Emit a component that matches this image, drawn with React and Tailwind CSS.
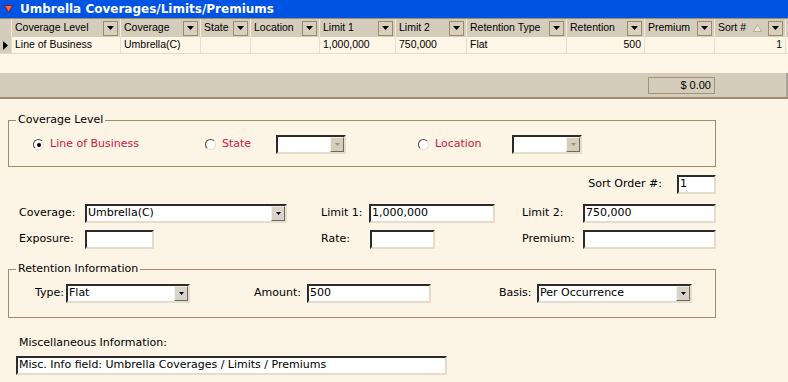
import React from 'react';

const columns = [
  { key: 'level', title: 'Coverage Level' },
  { key: 'coverage', title: 'Coverage' },
  { key: 'state', title: 'State' },
  { key: 'location', title: 'Location' },
  { key: 'limit1', title: 'Limit 1' },
  { key: 'limit2', title: 'Limit 2' },
  { key: 'retType', title: 'Retention Type' },
  { key: 'retention', title: 'Retention', right: true },
  { key: 'premium', title: 'Premium' },
  { key: 'sort', title: 'Sort #', right: true, sorted: true },
];

const row = {
  level: 'Line of Business',
  coverage: 'Umbrella(C)',
  state: '',
  location: '',
  limit1: '1,000,000',
  limit2: '750,000',
  retType: 'Flat',
  retention: '500',
  premium: '',
  sort: '1',
};

const gridCols = 'grid grid-cols-[12px_109px_80px_50px_69px_76px_71px_100px_78px_70px_71px]';

const HeaderButton = () => (
  <div className="flex h-[15px] w-[15px] shrink-0 items-center justify-center border border-[#9c8a68] bg-[#d8d0bf]">
    <svg width="7" height="4" viewBox="0 0 7 4">
      <path d="M0 0h7L3.5 4z" fill="#000" />
    </svg>
  </div>
);

const Field = ({ w, value = '' }) => (
  <div className={`${w} flex h-[19px] items-center border-2 border-t-[#2b2b2b] border-l-[#2b2b2b] border-r-[#e4ddcc] border-b-[#e4ddcc] bg-white px-[1px] text-black`}>
    {value}
  </div>
);

const Select = ({ w, value = '', disabled }) => (
  <div className={`${w} flex h-[19px] items-stretch border-2 border-t-[#2b2b2b] border-l-[#2b2b2b] border-r-[#e4ddcc] border-b-[#e4ddcc] bg-white`}>
    <div className="flex flex-1 items-center px-[1px]">{value}</div>
    <div
      className={`flex w-[14px] items-center justify-center border border-t-[#f4f1ea] border-l-[#f4f1ea] border-r-[#6e6a60] border-b-[#6e6a60] ${
        disabled ? 'bg-[#d6ceba]' : 'bg-[#d8d4cc]'
      }`}
    >
      <svg width="5" height="3" viewBox="0 0 5 3">
        <path d="M0 0h5L2.5 3z" fill={disabled ? '#9a9080' : '#000'} />
      </svg>
    </div>
  </div>
);

const Radio = ({ checked }) => (
  <div className="flex h-[11px] w-[11px] shrink-0 items-center justify-center rounded-full border border-t-[#4a4a4a] border-l-[#4a4a4a] border-r-[#e6e0d2] border-b-[#e6e0d2] bg-white">
    {checked && <div className="h-[4px] w-[4px] rounded-full bg-black" />}
  </div>
);

export default function App() {
  return (
    <div className="h-[382px] w-[788px] overflow-hidden bg-[#fcf4e4] font-['DejaVu_Sans',sans-serif] text-[11px] text-black">
      {/* title bar */}
      <div className="flex h-[18px] items-center bg-[#0054e3] pl-[4px]">
        <svg width="9" height="8" viewBox="0 0 9 8">
          <path d="M0.5 0.5h8L4.5 7.5z" fill="#e86a5c" stroke="#8a1a10" strokeWidth="1" />
        </svg>
        <span className="ml-[7px] text-[12px] font-bold leading-none text-white">Umbrella Coverages/Limits/Premiums</span>
      </div>

      {/* grid */}
      <div className="border-b-[2px] border-[#a08c6c] font-['Liberation_Sans',sans-serif] text-[10.5px]">
        <div className={`${gridCols} h-[19px] border-t border-[#a08c6c] bg-[#d5cdbc]`}>
          <div className="border-r border-[#f0ebe1]" />
          {columns.map((c) => (
            <div key={c.key} className="flex items-center justify-between border-r border-[#f0ebe1] pl-[3px] pr-[2px]">
              <span>{c.title}</span>
              <div className="flex items-center gap-[6px]">
                {c.sorted && (
                  <svg width="9" height="8" viewBox="0 0 9 8">
                    <path d="M4.5 0.5L8.5 7.5h-8z" fill="#ece6d8" stroke="#b8ad96" strokeWidth="1" />
                  </svg>
                )}
                <HeaderButton />
              </div>
            </div>
          ))}
        </div>
        <div className={`${gridCols} h-[17px] border-b border-[#e2ddd2] bg-[#fdf5e6]`}>
          <div className="flex items-center justify-center border-r border-[#e2ddd2] bg-[#d5cdbc]">
            <svg width="5" height="9" viewBox="0 0 5 9">
              <path d="M0 0l5 4.5L0 9z" fill="#000" />
            </svg>
          </div>
          {columns.map((c) => (
            <div
              key={c.key}
              className={`flex items-center border-r border-[#e2ddd2] px-[3px] ${c.right ? 'justify-end' : ''}`}
            >
              {row[c.key]}
            </div>
          ))}
        </div>
        <div className="h-[19px] bg-[#fdf5e6]" />
        <div className="flex h-[24px] items-center border-r-2 border-[#a8a39a] bg-[#d5cdbc]">
          <div className="ml-[648px] flex h-[17px] w-[67px] items-center justify-end border border-[#a69270] pr-[3px] text-[11px]">
            $ 0.00
          </div>
        </div>
      </div>

      {/* coverage level */}
      <fieldset className="ml-[8px] mt-[14px] w-[708px] border border-[#a08c6c] pb-[12px] pt-[8px]">
        <legend className="ml-[7px] px-[2px] leading-[14px]">Coverage Level</legend>
        <div className="flex items-center pl-[24px] text-[#d7143c]">
          <div className="flex w-[172px] items-center gap-[6px]">
            <Radio checked />
            <span>Line of Business</span>
          </div>
          <div className="flex w-[71px] items-center gap-[6px]">
            <Radio />
            <span>State</span>
          </div>
          <Select w="w-[70px]" disabled />
          <div className="ml-[72px] flex w-[94px] items-center gap-[6px]">
            <Radio />
            <span>Location</span>
          </div>
          <Select w="w-[70px]" disabled />
        </div>
      </fieldset>

      {/* sort order */}
      <div className="mt-[8px] flex w-[716px] items-center justify-end gap-[15px]">
        <span>Sort Order #:</span>
        <Field w="w-[39px]" value="1" />
      </div>

      {/* coverage / limits */}
      <div className="mt-[10px] grid grid-cols-[85px_236px_48px_153px_61px_133px] items-center">
        <span className="pl-[19px]">Coverage:</span>
        <Select w="w-[202px]" value="Umbrella(C)" />
        <span>Limit 1:</span>
        <Field w="w-[126px]" value="1,000,000" />
        <span>Limit 2:</span>
        <Field w="w-[133px]" value="750,000" />
      </div>
      <div className="mt-[7px] grid grid-cols-[85px_236px_49px_152px_61px_133px] items-center">
        <span className="pl-[19px]">Exposure:</span>
        <Field w="w-[69px]" />
        <span>Rate:</span>
        <Field w="w-[65px]" />
        <span>Premium:</span>
        <Field w="w-[133px]" />
      </div>

      {/* retention */}
      <fieldset className="ml-[8px] mt-[13px] w-[708px] border border-[#a08c6c] pb-[14px] pt-[8px]">
        <legend className="ml-[7px] px-[2px] leading-[14px]">Retention Information</legend>
        <div className="flex items-center pl-[26px]">
          <span className="w-[31px]">Type:</span>
          <Select w="w-[124px]" value="Flat" />
          <span className="ml-[64px] w-[53px]">Amount:</span>
          <Field w="w-[124px]" value="500" />
          <span className="ml-[68px] w-[38px]">Basis:</span>
          <Select w="w-[155px]" value="Per Occurrence" />
        </div>
      </fieldset>

      {/* misc */}
      <div className="mt-[18px] pl-[19px] leading-[14px]">Miscellaneous Information:</div>
      <div className="ml-[16px] mt-[6px]">
        <Field w="w-[431px]" value="Misc. Info field: Umbrella Coverages / Limits / Premiums" />
      </div>
    </div>
  );
}
